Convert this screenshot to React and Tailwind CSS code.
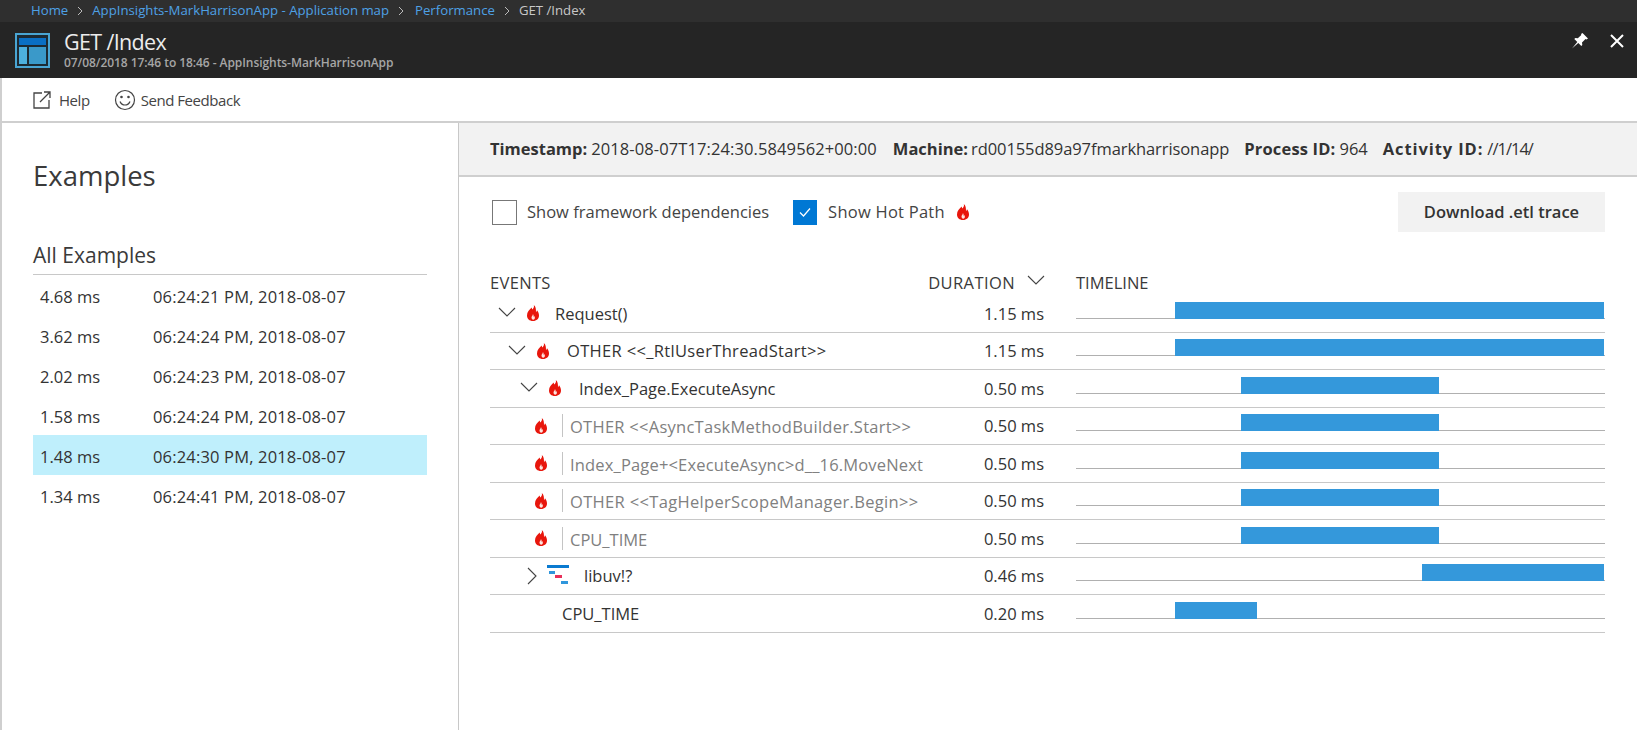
import React from "react";

const Flame = ({ className = "" }) => (
  <svg viewBox="0 0 14 16" className={"shrink-0 " + className} aria-hidden="true">
    <path fill="#e8160c" d="M7.800 0c.7 2-.4 3.200-1.300 4.400C5.900 3.800 5.700 3.200 5.700 2.600 3.300 4.700 1 7.200 1 10.500 1 13.800 3.400 16 7 16s6-2.300 6-5.500c0-2.300-1-3.700-2-5.200-.2.900-.4 1.400-1 1.900C10 4.300 9.800 1.500 7.800 0z" />
    <path fill="#fde4de" d="M6.900 9c.3 1.200-1.400 2-1.400 3.600 0 1.100.7 2.100 1.700 2.100 1.100 0 1.700-.9 1.700-1.900 0-.8-.3-1.200-.7-1.700-.1.400-.2.700-.5.900C7.700 11 7.700 9.800 6.900 9z" />
  </svg>
);

const Chevron = ({ right = false, className = "" }) => (
  <svg viewBox="0 0 18 18" className={className} fill="none" stroke="#444" strokeWidth="1.100" aria-hidden="true">
    {right ? <path d="M5 1l8 8-8 8" /> : <path d="M1 5l8 8 8-8" />}
  </svg>
);

const Sep = () => (
  <svg viewBox="0 0 8 10" className="w-[8px] h-[10px] mx-[8px]" fill="none" stroke="#bbb" aria-hidden="true"><path d="M2 1l4 4-4 4" /></svg>
);

const examples = [
  ["4.68 ms", "06:24:21 PM, 2018-08-07"],
  ["3.62 ms", "06:24:24 PM, 2018-08-07"],
  ["2.02 ms", "06:24:23 PM, 2018-08-07"],
  ["1.58 ms", "06:24:24 PM, 2018-08-07"],
  ["1.48 ms", "06:24:30 PM, 2018-08-07"],
  ["1.34 ms", "06:24:41 PM, 2018-08-07"],
];

const rows = [
  { name: "Request()", dur: "1.15 ms", left: 99, w: 429, indent: 8, chev: "down", flame: true },
  { name: "OTHER <<_RtlUserThreadStart>>", dur: "1.15 ms", left: 99, w: 429, indent: 18, chev: "down", flame: true, wide: true },
  { name: "Index_Page.ExecuteAsync", dur: "0.50 ms", left: 165, w: 198, indent: 30, chev: "down", flame: true, nudge: true },
  { name: "OTHER <<AsyncTaskMethodBuilder.Start>>", dur: "0.50 ms", left: 165, w: 198, flame: true, muted: true, track: "tracking-[0.016em]" },
  { name: "Index_Page+<ExecuteAsync>d__16.MoveNext", dur: "0.50 ms", left: 165, w: 198, flame: true, muted: true, track: "tracking-[0.01em]" },
  { name: "OTHER <<TagHelperScopeManager.Begin>>", dur: "0.50 ms", left: 165, w: 198, flame: true, muted: true, track: "tracking-[0.02em]" },
  { name: "CPU_TIME", dur: "0.50 ms", left: 165, w: 198, flame: true, muted: true, track: "" },
  { name: "libuv!?", dur: "0.46 ms", left: 346, w: 182, indent: 33, chev: "right", stack: true },
  { name: "CPU_TIME", dur: "0.20 ms", left: 99, w: 82, plain: true },
];

const EventCell = ({ r }) => {
  if (r.muted) {
    return (
      <div className="flex items-center h-full pl-[44px]">
        <Flame className="w-[14px] h-[16px]" />
        <span className={"ml-[14px] h-[23px] border-l border-[#c4c4c4] pl-[7px] leading-[25px] text-[#808080] whitespace-nowrap " + r.track}>{r.name}</span>
      </div>
    );
  }
  if (r.plain) {
    return <div className="flex items-center h-full pl-[72px] pt-[2px] whitespace-nowrap">{r.name}</div>;
  }
  return (
    <div className="flex items-center h-full" style={{ paddingLeft: r.indent }}>
      {r.chev === "down" ? <Chevron className="w-[18px] h-[18px] mr-[10px] mt-[-2px]" /> : <Chevron right className="w-[18px] h-[18px] mr-[6px]" />}
      {r.flame && <Flame className="w-[14px] h-[16px]" />}
      {r.stack && (
        <svg viewBox="0 0 22 19" className="w-[22px] h-[19px] mt-[-3px]" aria-hidden="true">
          <rect x="0" y="0" width="22" height="3" fill="#0a7ad0" />
          <rect x="2" y="6" width="6" height="3" fill="#2f96dc" />
          <rect x="8" y="10" width="7" height="3" fill="#e8305a" />
          <rect x="14" y="16" width="7" height="3" fill="#2f96dc" />
        </svg>
      )}
      <span className={r.wide ? "ml-[17px] mt-[2px] whitespace-nowrap tracking-[0.02em]" : r.nudge ? "ml-[17px] mt-[2px] whitespace-nowrap" : "ml-[15px] mt-[2px] whitespace-nowrap"}>{r.name}</span>
    </div>
  );
};

export default function App() {
  return (
    <div className="w-[1637px] h-[730px] overflow-hidden flex flex-col bg-white text-[#333] font-['Open_Sans','Noto_Sans',sans-serif]">
      <div className="h-[22px] shrink-0 bg-[#2f2f2f] flex items-center pl-[31px] text-[13.200px] text-[#c8c8c8]">
        <span className="text-[#4ea1e6]">Home</span>
        <Sep />
        <span className="text-[#4ea1e6]">AppInsights-MarkHarrisonApp - Application map</span>
        <Sep />
        <span className="text-[#4ea1e6] ml-[2px]">Performance</span>
        <Sep />
        <span>GET /Index</span>
      </div>

      <div className="h-[56px] shrink-0 bg-[#252525] flex items-center pl-[15px] pr-[13px] text-white">
        <svg viewBox="0 0 35 35" className="w-[35px] h-[35px]" aria-hidden="true">
          <rect width="35" height="35" fill="#49a5d3" />
          <rect x="2" y="2" width="31" height="31" fill="#1c2a33" />
          <rect x="4" y="5" width="27" height="7" fill="#0a6fc4" />
          <rect x="4" y="14" width="8" height="17" fill="#4db0de" />
          <rect x="14" y="14" width="17" height="17" fill="#3a99c9" />
        </svg>
        <div className="ml-[14px] flex-1 min-w-0">
          <div className="text-[21.500px] leading-[26px] text-[#ececec] mt-[-1px] tracking-[-0.03em]">GET /Index</div>
          <div className="text-[12px] leading-[15px] font-semibold text-[#a6a6a6] tracking-[-0.005em]">07/08/2018 17:46 to 18:46 - AppInsights-MarkHarrisonApp</div>
        </div>
        <svg viewBox="0 0 18 18" className="w-[18px] h-[18px] mr-[21px] mt-[-18px]" aria-hidden="true">
          <path fill="#fff" d="M11.500 1L17 6.500l-1.500 1-1-.5-3.500 3.500.3 2.500-1 1-3-3L1 16.500 6.300 10l-3-3 1-1 2.500.3L10.300 3l-.3-1z" />
        </svg>
        <svg viewBox="0 0 14 14" className="w-[14px] h-[14px] mt-[-18px]" fill="none" stroke="#fff" strokeWidth="2" aria-hidden="true">
          <path d="M1 1l12 12M13 1L1 13" />
        </svg>
      </div>

      <div className="h-[45px] shrink-0 border-b-2 border-[#cfcfcf] border-l-2 border-l-[#cfcfcf] flex items-center pl-[30px] text-[15px] text-[#444] tracking-[-0.03em]">
        <svg viewBox="0 0 20 20" className="w-[20px] h-[20px]" fill="none" stroke="#444" strokeWidth="1.300" aria-hidden="true">
          <path d="M10 3H2v15h15v-8M8 12L18 2M12 2h6v6" />
        </svg>
        <span className="ml-[7px] mt-[1px]">Help</span>
        <svg viewBox="0 0 22 22" className="w-[22px] h-[22px] ml-[24px]" fill="none" stroke="#444" strokeWidth="1.200" aria-hidden="true">
          <circle cx="11" cy="11" r="9.500" />
          <path d="M6 12.500c1 2.500 3 3.500 5 3.500s4-1 5-3.500" />
          <circle cx="7.500" cy="8" r="0.700" fill="#444" />
          <circle cx="14.500" cy="8" r="0.700" fill="#444" />
        </svg>
        <span className="ml-[5px] mt-[1px]">Send Feedback</span>
      </div>

      <div className="flex-1 flex min-h-0">
        <aside className="w-[459px] shrink-0 border-r border-r-[#c8c8c8] border-l-2 border-l-[#cfcfcf] pl-[31px] pr-[31px] pt-[33px]">
          <h1 className="text-[27.500px] leading-[40px] text-[#3a3a3a]">Examples</h1>
          <h2 className="mt-[44px] text-[21px] leading-[30px] pb-[4px] border-b border-[#c8c8c8] text-[#3a3a3a]">All Examples</h2>
          <ul className="text-[16.500px]">
            {examples.map(([ms, time]) => {
              const selected = ms === "1.48 ms";
              return (
                <li key={ms} className={selected ? "h-[40px] flex items-center pl-[7px] bg-[#bfeffc] pt-[5px]" : "h-[40px] flex items-center pl-[7px] pt-[5px]"}>
                  <span className="w-[113px]">{ms}</span>
                  <span className="tracking-[0.01em]">{time}</span>
                </li>
              );
            })}
          </ul>
        </aside>

        <main className="flex-1 min-w-0 flex flex-col">
          <div className="h-[54px] shrink-0 bg-[#f2f2f2] border-b-2 border-[#cfcfcf] flex items-center pl-[31px] text-[16.500px] whitespace-nowrap">
            <b className="font-bold">Timestamp:</b><span className="ml-[4px] tracking-[0.006em]">2018-08-07T17:24:30.5849562+00:00</span>
            <b className="font-bold ml-[16px]">Machine:</b><span className="ml-[3px] tracking-[-0.005em]">rd00155d89a97fmarkharrisonapp</span>
            <b className="font-bold ml-[15px] tracking-[0.01em]">Process ID:</b><span className="ml-[4px]">964</span>
            <b className="font-bold ml-[15px] tracking-[0.055em]">Activity ID:</b><span className="ml-[4px] tracking-[-0.06em]">//1/14/</span>
          </div>

          <div className="pl-[32px] pr-[32px] pt-[16px] flex items-center h-[54px] text-[16.500px] text-[#444]">
            <span className="ml-[1px] w-[25px] h-[25px] border border-[#777] bg-white" />
            <span className="ml-[10px]">Show framework dependencies</span>
            <span className="ml-[24px] w-[24px] h-[25px] bg-[#0078d4] flex items-center justify-center">
              <svg viewBox="0 0 14 14" className="w-[14px] h-[14px]" fill="none" stroke="#fff" strokeWidth="1.200" aria-hidden="true"><path d="M2 7.500l3.500 3.500L12 3.500" /></svg>
            </span>
            <span className="ml-[11px] tracking-[0.015em]">Show Hot Path</span>
            <Flame className="ml-[11px] w-[14px] h-[16px]" />
            <button className="ml-auto w-[207px] h-[40px] bg-[#f2f2f2] font-semibold text-[#333] text-[16.500px]">Download .etl trace</button>
          </div>

          <div className="pl-[31px] pr-[32px] mt-[40px] text-[16.500px]">
            <div className="flex h-[24px] items-center text-[#3a3a3a]">
              <div className="w-[430px] tracking-[0.02em]">EVENTS</div>
              <div className="w-[124px] flex items-center justify-end">
                <span className="tracking-[0.025em]">DURATION</span>
                <Chevron className="w-[18px] h-[18px] ml-[12px] mr-[-1px] mt-[-6px]" />
              </div>
              <div className="ml-[32px]">TIMELINE</div>
            </div>
            {rows.map((r, i) => (
              <div key={i} className="flex h-[37.500px] border-b border-[#c8c8c8] box-border">
                <div className="w-[430px] h-full">
                  <EventCell r={r} />
                </div>
                <div className="w-[124px] flex items-center justify-end pt-[2px]">{r.dur}</div>
                <div className="flex-1 ml-[32px] relative">
                  <div className="absolute left-0 right-0 bottom-[13px] h-px bg-[#b0b0b0]" />
                  <div className="absolute bottom-[13px] h-[17px] bg-[#3498db]" style={{ left: r.left, width: r.w }} />
                </div>
              </div>
            ))}
          </div>
        </main>
      </div>
    </div>
  );
}
